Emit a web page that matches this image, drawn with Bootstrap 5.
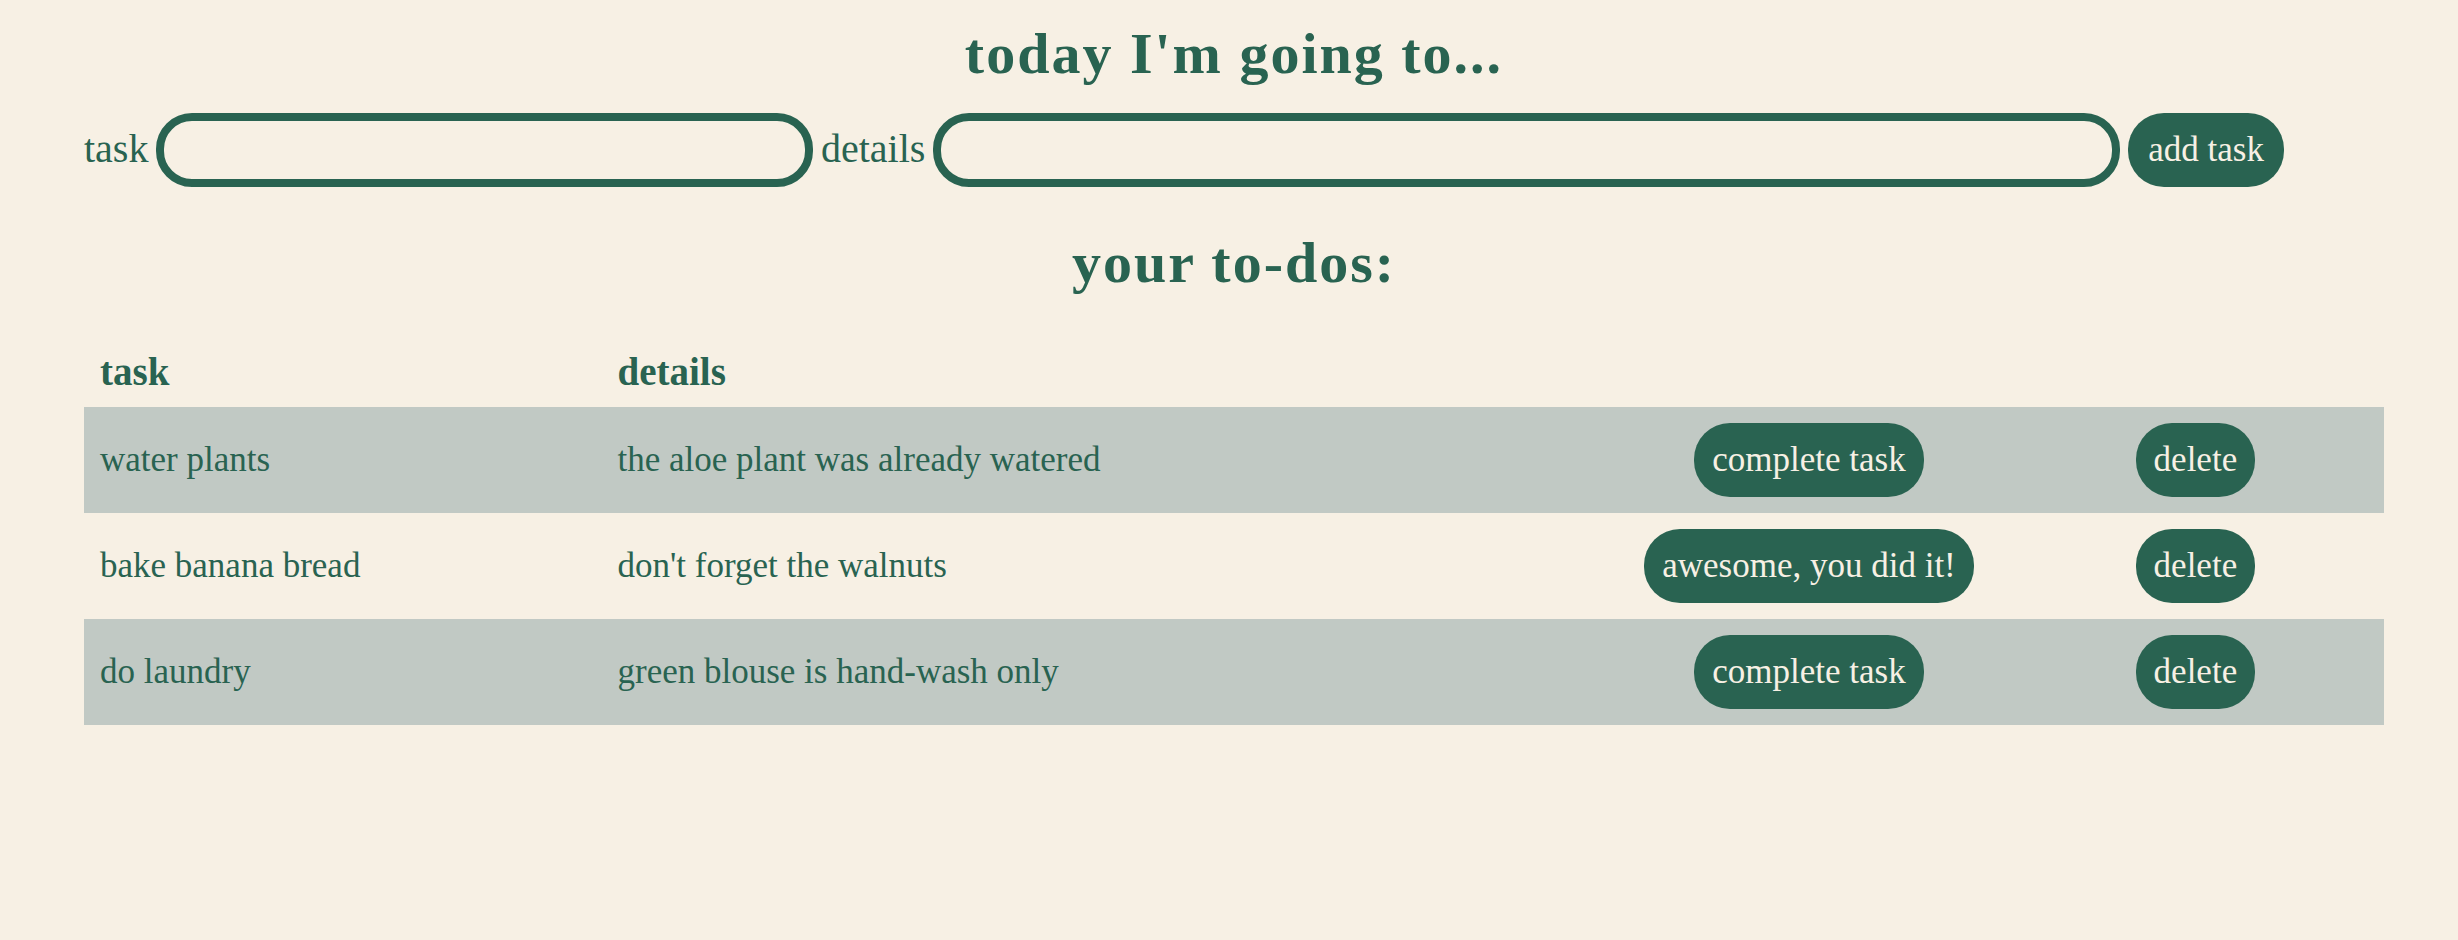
<!DOCTYPE html>
<html lang="en">
<head>
<meta charset="utf-8">
<meta name="viewport" content="width=device-width, initial-scale=1">
<title>to-dos</title>
<link rel="stylesheet" href="https://cdn.jsdelivr.net/npm/bootstrap@5.3.0/dist/css/bootstrap.min.css">
<style>
  :root { --cream: #f7f0e4; --green: #296351; --stripe: #c1c9c4; }
  body { background: var(--cream); color: var(--green); font-family: "Liberation Serif", serif; font-size: 35px; line-height: 42px; }
  main { padding: 22px 74px 0 84px; }
  .title { font-size: 58px; font-weight: 700; line-height: 64px; letter-spacing: 2px; }
  .task-form { margin: 27px 100px 44px 0; }
  .task-form label { font-size: 40px; padding-bottom: 3px; }
  .task-form .btn-pill { --bs-btn-padding-x: 20px; }
  .pill-input { height: 74px; min-width: 0; padding: 0 18px; border: 8px solid var(--green); border-radius: 36px; background: transparent; color: inherit; font-size: 35px; }
  .input-task { flex: 604 1 0; }
  .input-details { flex: 1134 1 0; }
  .btn-pill { --bs-btn-color: var(--cream); --bs-btn-bg: var(--green); --bs-btn-hover-color: var(--cream); --bs-btn-hover-bg: #1e4d3e;
    --bs-btn-padding-x: 18px; --bs-btn-padding-y: 16px; --bs-btn-border-width: 0; --bs-btn-border-radius: 36px;
    --bs-btn-font-size: 35px; --bs-btn-line-height: 42px; white-space: nowrap; }
  .todo-table { --bs-table-color: var(--green); --bs-table-bg: transparent; --bs-table-striped-color: var(--green); --bs-table-striped-bg: var(--stripe); table-layout: fixed; color: var(--green); margin-top: 38px; }
  .todo-table > :not(caption) > * > * { padding: 16px; border: 0; }
  .todo-table > thead > tr > th { font-size: 39px; padding-top: 18px; padding-bottom: 14px; }
  .col-name { width: 22.5%; }
  .col-info { width: 43.9%; }
  .col-done { width: 17.2%; }
</style>
</head>
<body>
<main>
  <h1 class="title text-center mb-0">today I'm going to...</h1>
  <form class="task-form d-flex align-items-center gap-2">
    <label for="task">task</label>
    <input class="pill-input input-task" id="task" type="text">
    <label for="details">details</label>
    <input class="pill-input input-details" id="details" type="text">
    <button class="btn btn-pill" type="button">add task</button>
  </form>
  <h2 class="title text-center mb-0">your to-dos:</h2>
  <table class="table table-striped todo-table align-middle">
    <colgroup><col class="col-name"><col class="col-info"><col class="col-done"><col></colgroup>
    <thead>
      <tr><th scope="col">task</th><th scope="col">details</th><th></th><th></th></tr>
    </thead>
    <tbody>
      <tr>
        <td>water plants</td><td>the aloe plant was already watered</td>
        <td class="text-center"><button class="btn btn-pill" type="button">complete task</button></td>
        <td class="text-center"><button class="btn btn-pill" type="button">delete</button></td>
      </tr>
      <tr>
        <td>bake banana bread</td><td>don't forget the walnuts</td>
        <td class="text-center"><button class="btn btn-pill" type="button">awesome, you did it!</button></td>
        <td class="text-center"><button class="btn btn-pill" type="button">delete</button></td>
      </tr>
      <tr>
        <td>do laundry</td><td>green blouse is hand-wash only</td>
        <td class="text-center"><button class="btn btn-pill" type="button">complete task</button></td>
        <td class="text-center"><button class="btn btn-pill" type="button">delete</button></td>
      </tr>
    </tbody>
  </table>
</main>
<script src="https://cdn.jsdelivr.net/npm/bootstrap@5.3.0/dist/js/bootstrap.bundle.min.js"></script>
</body>
</html>
